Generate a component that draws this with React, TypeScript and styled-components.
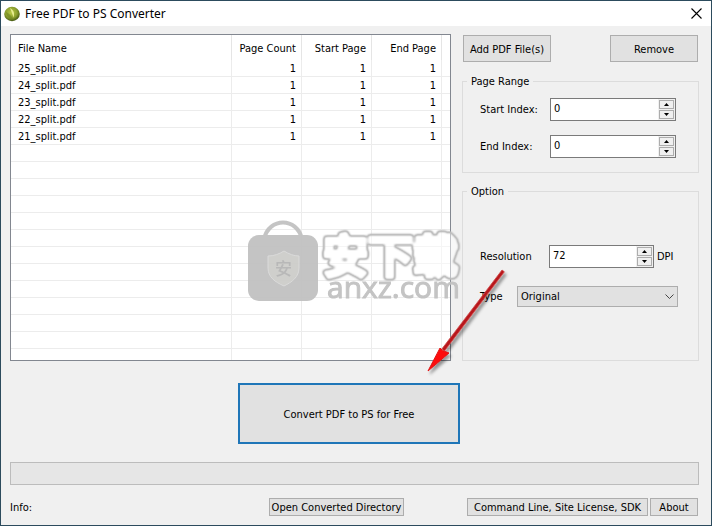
import React, { useState } from "react";
import styled, { createGlobalStyle } from "styled-components";

const GlobalStyle = createGlobalStyle`
  *, *::before, *::after { box-sizing: border-box; }
  body { margin: 0; background: #f0f0f0; }
  body, button, input, select, table {
    font-family: "DejaVu Sans Condensed", "Noto Sans", sans-serif;
    font-size: 11px;
    line-height: 14px;
    color: #000;
  }
`;

const Window = styled.div`
  position: relative;
  display: flex;
  flex-direction: column;
  min-height: 100vh;
  border: 1px solid #2c4b5d;
  background: #f0f0f0;
  overflow: hidden;
`;

const TitleBar = styled.header`
  display: flex;
  align-items: center;
  gap: 5px;
  height: 25px;
  padding: 0 9px 0 3px;
  background: #fff;
`;

const Title = styled.h1`
  flex: 1;
  margin: 0;
  font-family: "Noto Sans", sans-serif;
  font-size: 12px;
  line-height: 16px;
  font-weight: 400;
`;

const CloseButton = styled.button`
  display: flex;
  padding: 0;
  border: 0;
  background: none;
`;

const Content = styled.main`
  flex: 1;
  display: flex;
  flex-direction: column;
  padding: 8px 12px 9px 9px;
`;

const Workspace = styled.div`
  flex: 1;
  display: grid;
  grid-template-columns: minmax(0, 1fr) 237px;
  gap: 11px;
`;

const ListBox = styled.div`
  display: grid;
  border: 1px solid #828790;
  background: #fff;
`;

const FileTable = styled.table`
  width: 100%;
  height: 100%;
  table-layout: fixed;
  border-collapse: separate;
  border-spacing: 0;
`;

const HeadCell = styled.th<{ $numeric?: boolean }>`
  height: 25px;
  padding: 2px 5px 0 7px;
  border-right: 1px solid #e5e5e5;
  font-weight: 400;
  text-align: ${(p) => (p.$numeric ? "right" : "left")};
  white-space: nowrap;

  &:last-child { border-right: 0; }
`;

const Cell = styled.td<{ $numeric?: boolean }>`
  height: 17px;
  padding: 2px 5px 0 7px;
  border-right: 1px solid #ececec;
  border-bottom: 1px solid #ececec;
  text-align: ${(p) => (p.$numeric ? "right" : "left")};

  &:last-child { border-right: 0; }
`;

const FillerCell = styled.td`
  padding: 0;
  border-right: 1px solid #ececec;

  &:last-child { border-right: 0; }
`;

const SidePanel = styled.div`
  display: flex;
  flex-direction: column;
  gap: 11px;
`;

const ButtonRow = styled.div`
  display: flex;
  justify-content: space-between;
  padding: 1px;
`;

const Button = styled.button<{ $width: number; $height: number }>`
  width: ${(p) => p.$width}px;
  height: ${(p) => p.$height}px;
  padding: 2px 0 0;
  border: 1px solid #adadad;
  background: #e1e1e1;
  white-space: nowrap;
`;

const PrimaryButton = styled(Button)`
  border: 2px solid #1f76b8;
`;

const Group = styled.fieldset<{ $grow?: boolean }>`
  flex: ${(p) => (p.$grow ? "1" : "none")};
  min-width: 0;
  margin: 0;
  padding: 0 0 14px 17px;
  border: 1px solid #dcdcdc;
`;

const Legend = styled.legend`
  margin-left: -13px;
  padding: 1px 4px 0;
`;

const Fields = styled.div<{ $top: number; $gap: number }>`
  display: flex;
  flex-direction: column;
  gap: ${(p) => p.$gap}px;
  padding-top: ${(p) => p.$top}px;
`;

const Field = styled.div`
  display: flex;
  align-items: center;
`;

const Label = styled.label<{ $width: number }>`
  width: ${(p) => p.$width}px;
`;

const Unit = styled.span`
  margin-left: 3px;
`;

const SpinBox = styled.div<{ $width: number }>`
  display: flex;
  width: ${(p) => p.$width}px;
  height: 23px;
  border: 1px solid #7a7a7a;
  background: #fff;
`;

const SpinInput = styled.input`
  flex: 1;
  min-width: 0;
  padding: 0 3px 2px;
  border: 0;
  background: none;
  outline: none;
`;

const SpinButtons = styled.div`
  display: flex;
  flex-direction: column;
  justify-content: space-between;
  width: 17px;
  padding: 1px;
  background: #f0f0f0;
`;

const SpinButton = styled.button`
  display: flex;
  align-items: center;
  justify-content: center;
  height: 9px;
  padding: 0;
  border: 1px solid #adadad;
  background: #f0f0f0;
`;

const SelectBox = styled.div`
  position: relative;
  width: 161px;
  height: 21px;
`;

const Select = styled.select`
  width: 100%;
  height: 100%;
  padding: 1px 20px 0 3px;
  border: 1px solid #adadad;
  border-radius: 0;
  background: #e1e1e1;
  appearance: none;
`;

const SelectArrow = styled.svg`
  position: absolute;
  top: 7px;
  right: 4px;
  pointer-events: none;
`;

const ActionRow = styled.div`
  display: flex;
  justify-content: center;
  padding: 22px 11px 18px 0;
`;

const Progress = styled.div`
  height: 23px;
  border: 1px solid #bcbcbc;
  background: #e6e6e6;
`;

const Footer = styled.footer`
  display: grid;
  grid-template-columns: 259px 1fr auto;
  align-items: center;
  padding: 13px 1px 0 0;
`;

const FooterLinks = styled.div`
  display: flex;
  gap: 2px;
`;

const Info = styled.span`
  padding-top: 2px;
`;

const Watermark = styled.svg`
  position: absolute;
  top: 218px;
  left: 245px;
  opacity: 0.95;
  pointer-events: none;
`;

const Pointer = styled.svg`
  position: absolute;
  top: 258px;
  left: 418px;
  pointer-events: none;
`;

const files = ["25_split.pdf", "24_split.pdf", "23_split.pdf", "22_split.pdf", "21_split.pdf"];
const blankRows = Array.from({ length: 12 }, (_, i) => i);
const columns = [0, 1, 2, 3, 4];

function AppIcon() {
  return (
    <svg width="16" height="16" viewBox="0 0 16 16" aria-hidden="true">
      <defs>
        <radialGradient id="ball" cx="0.45" cy="0.4" r="0.62">
          <stop offset="0" stopColor="#b9c948" />
          <stop offset="0.6" stopColor="#8ca02e" />
          <stop offset="1" stopColor="#3f5210" />
        </radialGradient>
      </defs>
      <ellipse cx="8" cy="8" rx="7.8" ry="7.2" fill="url(#ball)" />
      <path d="M6 2C9.5 4 11 7 9.5 11.5C8.5 8 7 4.5 6 2Z" fill="#eef29a" opacity="0.9" />
      <path d="M2 6C4.5 7 8 10 9 13.6C5.4 13.2 2.4 10.4 2 6Z" fill="#6f8522" opacity="0.6" />
    </svg>
  );
}

interface SpinnerProps {
  id: string;
  width: number;
  initial: number;
}

function Spinner({ id, width, initial }: SpinnerProps) {
  const [value, setValue] = useState(String(initial));
  const step = (by: number) => setValue(String(Math.max(0, (Number(value) || 0) + by)));
  return (
    <SpinBox $width={width}>
      <SpinInput id={id} value={value} onChange={(e) => setValue(e.target.value)} />
      <SpinButtons>
        <SpinButton type="button" aria-label="Increase" onClick={() => step(1)}>
          <svg width="5" height="3" viewBox="0 0 5 3"><path d="M0 3L2.5 0L5 3Z" /></svg>
        </SpinButton>
        <SpinButton type="button" aria-label="Decrease" onClick={() => step(-1)}>
          <svg width="5" height="3" viewBox="0 0 5 3"><path d="M0 0L2.5 3L5 0Z" /></svg>
        </SpinButton>
      </SpinButtons>
    </SpinBox>
  );
}

function FileList() {
  return (
    <ListBox>
      <FileTable>
        <colgroup>
          <col />
          <col width="70" />
          <col width="70" />
          <col width="70" />
          <col width="8" />
        </colgroup>
        <thead>
          <tr>
            <HeadCell>File Name</HeadCell>
            <HeadCell $numeric>Page Count</HeadCell>
            <HeadCell $numeric>Start Page</HeadCell>
            <HeadCell $numeric>End Page</HeadCell>
            <HeadCell />
          </tr>
        </thead>
        <tbody>
          {files.map((name) => (
            <tr key={name}>
              <Cell>{name}</Cell>
              <Cell $numeric>1</Cell>
              <Cell $numeric>1</Cell>
              <Cell $numeric>1</Cell>
              <Cell />
            </tr>
          ))}
          {blankRows.map((row) => (
            <tr key={row}>{columns.map((c) => <Cell key={c} />)}</tr>
          ))}
          <tr>{columns.map((c) => <FillerCell key={c} />)}</tr>
        </tbody>
      </FileTable>
    </ListBox>
  );
}

function SiteWatermark() {
  return (
    <Watermark width="220" height="90" viewBox="0 0 220 90">
      <defs>
        <filter id="contour" x="-5%" y="-10%" width="110%" height="120%" colorInterpolationFilters="sRGB">
          <feGaussianBlur in="SourceGraphic" stdDeviation="0.9" result="soft" />
          <feComponentTransfer in="soft" result="band">
            <feFuncA type="table" tableValues="0 0.6 1 1 0.6 0" />
          </feComponentTransfer>
          <feFlood floodColor="#bdbdbd" result="gray" />
          <feComposite in="gray" in2="band" operator="in" result="edge" />
          <feFlood floodColor="#fff" floodOpacity="0.5" result="white" />
          <feComposite in="white" in2="SourceGraphic" operator="in" result="body" />
          <feMerge>
            <feMergeNode in="body" />
            <feMergeNode in="edge" />
          </feMerge>
        </filter>
      </defs>
      <path d="M18 20C23 -2 51 -2 56 20" fill="none" stroke="#c1c1c1" strokeWidth="4" />
      <rect x="2" y="16" width="70" height="66" rx="11" fill="#c1c1c1" />
      <path d="M38 32C43 35 48 37 53 37V49C53 58 46 63 38 67C29 63 22 58 22 49V37C28 37 33 35 38 32Z" fill="#cdcdca" stroke="#d9d9d9" />
      <text x="29" y="56" fontSize="17" fontFamily="Noto Sans CJK SC" fontWeight="500" fill="#b5b5b5">安</text>
      <text
        x="77"
        y="54"
        fontSize="45"
        fontFamily="Noto Sans CJK SC"
        fontWeight="500"
        fill="#bdbdbd"
        stroke="#bdbdbd"
        strokeWidth="6"
        strokeLinejoin="round"
        filter="url(#contour)"
      >
        安下载
      </text>
      <text x="81" y="79" fontSize="30" fontFamily="Open Sans" fill="#c1c1c1" stroke="#c1c1c1">anxz.com</text>
    </Watermark>
  );
}

function RedPointer() {
  return (
    <Pointer width="94" height="124" viewBox="0 0 94 124" aria-hidden="true">
      <defs>
        <filter id="cast" x="-20%" y="-20%" width="140%" height="140%">
          <feDropShadow dx="2" dy="3" stdDeviation="1.5" floodColor="#000" floodOpacity="0.4" />
        </filter>
      </defs>
      <g filter="url(#cast)">
        <path d="M83 11L85.4 12.8L25.5 92L22.8 90Z" fill="#b8191c" stroke="#cf4a4a" strokeWidth="0.8" strokeLinejoin="round" />
        <path d="M9 112L21 89L23.5 91.5L30 94Z" fill="#fd0a0a" stroke="#e01818" strokeWidth="1" />
      </g>
    </Pointer>
  );
}

export default function App() {
  return (
    <>
      <GlobalStyle />
      <Window>
        <TitleBar>
          <AppIcon />
          <Title>Free PDF to PS Converter</Title>
          <CloseButton type="button" aria-label="Close">
            <svg width="11" height="11" viewBox="0 0 11 11"><path d="M0.5 0.5L10.5 10.5M10.5 0.5L0.5 10.5" stroke="#000" strokeWidth="1.1" /></svg>
          </CloseButton>
        </TitleBar>
        <Content>
          <Workspace>
            <FileList />
            <SidePanel>
              <ButtonRow>
                <Button type="button" $width={88} $height={27}>Add PDF File(s)</Button>
                <Button type="button" $width={88} $height={27}>Remove</Button>
              </ButtonRow>
              <Group>
                <Legend>Page Range</Legend>
                <Fields $top={9} $gap={14}>
                  <Field>
                    <Label htmlFor="start" $width={70}>Start Index:</Label>
                    <Spinner id="start" width={126} initial={0} />
                  </Field>
                  <Field>
                    <Label htmlFor="end" $width={70}>End Index:</Label>
                    <Spinner id="end" width={126} initial={0} />
                  </Field>
                </Fields>
              </Group>
              <Group $grow>
                <Legend>Option</Legend>
                <Fields $top={46} $gap={18}>
                  <Field>
                    <Label htmlFor="resolution" $width={69}>Resolution</Label>
                    <Spinner id="resolution" width={105} initial={72} />
                    <Unit>DPI</Unit>
                  </Field>
                  <Field>
                    <Label htmlFor="type" $width={37}>Type</Label>
                    <SelectBox>
                      <Select id="type" defaultValue="Original">
                        <option>Original</option>
                      </Select>
                      <SelectArrow width="9" height="7" viewBox="0 0 9 7">
                        <path d="M0.5 1.5L4.5 5.5L8.5 1.5" fill="none" stroke="#444" />
                      </SelectArrow>
                    </SelectBox>
                  </Field>
                </Fields>
              </Group>
            </SidePanel>
          </Workspace>
          <ActionRow>
            <PrimaryButton type="button" $width={222} $height={61}>Convert PDF to PS for Free</PrimaryButton>
          </ActionRow>
          <Progress role="progressbar" aria-label="Conversion progress" aria-valuenow={0} />
          <Footer>
            <Info>Info:</Info>
            <div>
              <Button type="button" $width={135} $height={18}>Open Converted Directory</Button>
            </div>
            <FooterLinks>
              <Button type="button" $width={181} $height={18}>Command Line, Site License, SDK</Button>
              <Button type="button" $width={48} $height={18}>About</Button>
            </FooterLinks>
          </Footer>
        </Content>
        <SiteWatermark />
        <RedPointer />
      </Window>
    </>
  );
}
